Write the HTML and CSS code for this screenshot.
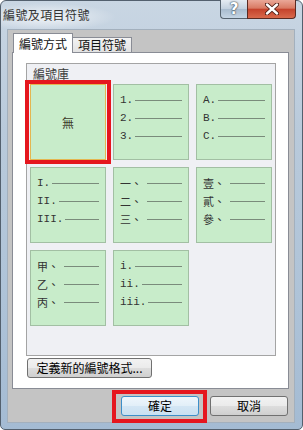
FILE: index.html
```html
<!DOCTYPE html>
<html lang="zh-Hant">
<head>
    <meta charset="UTF-8">
    <title>編號及項目符號</title>
    <link rel="stylesheet" href="styles.css">
</head>
<body>
    <div class="window">
        <div class="titlebar">
            <span class="title">編號及項目符號</span>
            <div class="caption">
                <span class="cap-help">?</span>
                <span class="cap-close">
                    <svg width="14" height="12" viewBox="0 0 14 12">
                        <path d="M2 1.5 L12 10.5 M12 1.5 L2 10.5" stroke="#4a1a12" stroke-width="4.2" stroke-linecap="round"/>
                        <path d="M2 1.5 L12 10.5 M12 1.5 L2 10.5" stroke="#fff" stroke-width="2.4" stroke-linecap="round"/>
                    </svg>
                </span>
            </div>
        </div>

        <div class="client">
            <div class="tabs">
                <span class="tab active">編號方式</span>
                <span class="tab">項目符號</span>
            </div>

            <div class="panel">
                <div class="library">
                    <div class="library-title">編號庫</div>
                    <div class="gallery">
                        <div class="cell none selected"><span>無</span></div>
                        <div class="cell">
                            <div class="row"><span>1.</span><i class="rule"></i></div>
                            <div class="row"><span>2.</span><i class="rule"></i></div>
                            <div class="row"><span>3.</span><i class="rule"></i></div>
                        </div>
                        <div class="cell">
                            <div class="row"><span>A.</span><i class="rule"></i></div>
                            <div class="row"><span>B.</span><i class="rule"></i></div>
                            <div class="row"><span>C.</span><i class="rule"></i></div>
                        </div>
                        <div class="cell">
                            <div class="row"><span>I.</span><i class="rule"></i></div>
                            <div class="row"><span>II.</span><i class="rule"></i></div>
                            <div class="row"><span>III.</span><i class="rule"></i></div>
                        </div>
                        <div class="cell cjk">
                            <div class="row"><span>一、</span><i class="rule"></i></div>
                            <div class="row"><span>二、</span><i class="rule"></i></div>
                            <div class="row"><span>三、</span><i class="rule"></i></div>
                        </div>
                        <div class="cell cjk">
                            <div class="row"><span>壹、</span><i class="rule"></i></div>
                            <div class="row"><span>貳、</span><i class="rule"></i></div>
                            <div class="row"><span>參、</span><i class="rule"></i></div>
                        </div>
                        <div class="cell cjk">
                            <div class="row"><span>甲、</span><i class="rule"></i></div>
                            <div class="row"><span>乙、</span><i class="rule"></i></div>
                            <div class="row"><span>丙、</span><i class="rule"></i></div>
                        </div>
                        <div class="cell">
                            <div class="row"><span>i.</span><i class="rule"></i></div>
                            <div class="row"><span>ii.</span><i class="rule"></i></div>
                            <div class="row"><span>iii.</span><i class="rule"></i></div>
                        </div>
                    </div>
                </div>

                <button class="btn define">定義新的編號格式...</button>
            </div>

            <div class="actions">
                <button class="btn ok">確定</button>
                <button class="btn">取消</button>
            </div>
        </div>
    </div>
</body>
</html>
```

FILE: styles.css
```css
* {
    box-sizing: border-box;
}

body {
    margin: 0;
    font-family: "Noto Sans CJK TC", "Noto Sans", sans-serif;
    color: #000;
}

.window {
    width: 303px;
    height: 430px;
    padding: 0 7px 6px 6px;
    border: 1px solid #53606e;
    border-radius: 6px 6px 5px 5px;
    background:
        radial-gradient(ellipse 70px 14px at 45px 16px, rgba(255,255,255,0.75), rgba(255,255,255,0) 100%),
        linear-gradient(to bottom, #c9d6e3, #b9cadb 30%, #aec3d8 70%, #a4bbd3);
    display: flex;
    flex-direction: column;
}

/* title bar */

.titlebar {
    height: 28px;
    display: flex;
    align-items: flex-start;
}

.title {
    margin: 6px 0 0 -4px;
    font-size: 12px;
    line-height: 16px;
    letter-spacing: 0.4px;
    color: #333;
}

.caption {
    margin: -1px -1px 0 auto;
    display: flex;
}

.cap-help,
.cap-close {
    height: 19px;
    display: flex;
    align-items: center;
    justify-content: center;
    border: 1px solid #56636f;
    border-top: none;
}

.cap-help {
    width: 27px;
    border-right: none;
    border-radius: 0 0 0 4px;
    background: linear-gradient(to bottom, #e4ebf2, #c3d1df 48%, #a9bccf 52%, #c5d5e4);
    font: bold 15px "DejaVu Sans", sans-serif;
    color: #fff;
    text-shadow: 0 0 2px #2e3a46, 0 0 1px #2e3a46;
}

.cap-close {
    width: 49px;
    border-radius: 0 0 4px 0;
    border-color: #5a2a22;
    background: linear-gradient(to bottom, #eaa898, #d97a63 45%, #c5432c 52%, #d8694c);
}

/* dialog body */

.client {
    flex: 1;
    background: #c4c4c4;
    border: 1px solid #a3b0bd;
    padding: 3px 5px 0 4px;
    display: flex;
    flex-direction: column;
}

.tabs {
    display: flex;
    align-items: flex-end;
    height: 20px;
    padding-left: 1px;
    margin-bottom: -1px;
    position: relative;
    z-index: 1;
}

.tab {
    font-size: 12px;
    line-height: 14px;
    padding: 0 5px;
    height: 15px;
    margin-bottom: 1px;
    border: 1px solid #898c95;
    border-bottom: none;
    border-left: none;
    background: linear-gradient(to bottom, #f3f3f3, #e2e2e2);
    color: #111;
}

.tab.active {
    height: 20px;
    line-height: 19px;
    margin-bottom: 0;
    border-left: 1px solid #898c95;
    background: #fff;
}

.panel {
    height: 337px;
    background: #fff;
    border: 1px solid #898c95;
    padding: 10px 0 0 13px;
}

.library {
    width: 250px;
    height: 293px;
    border: 1px solid #a4a4a4;
    background: #eff0f4;
    padding: 0 3px;
}

.library-title {
    height: 20px;
    padding: 1px 0 0 3px;
    font-size: 12px;
    line-height: 17px;
    color: #3a3a3a;
}

.gallery {
    display: grid;
    grid-template-columns: repeat(3, 76px);
    grid-auto-rows: 76px;
    gap: 7px;
}

.cell {
    position: relative;
    background: #c8ecca;
    border: 1px solid #a2bfa3;
    padding: 6px 6px 0 6px;
}

.row {
    display: flex;
    align-items: center;
    height: 18px;
    font-family: "Liberation Mono", "Noto Sans CJK TC", monospace;
    font-size: 11px;
    color: #333;
    white-space: nowrap;
}

.rule {
    flex: 1;
    height: 1px;
    margin: 1px 0 0 2px;
    background: #7a8b7b;
}

.cjk .rule {
    margin-left: 5px;
}

.cell.none {
    display: flex;
    align-items: center;
    justify-content: center;
    padding: 0;
    font-size: 12px;
    color: #3d3a2a;
}

.cell.selected {
    border-color: #e4b650;
}

.cell.selected::after {
    content: "";
    position: absolute;
    top: -5px;
    left: -6px;
    right: -6px;
    bottom: -5px;
    border: 4px solid #e5161e;
}

/* buttons */

.btn {
    height: 20px;
    padding: 0;
    font-family: "Noto Sans CJK TC", "Noto Sans", sans-serif;
    font-size: 12px;
    line-height: 16px;
    color: #000;
    border: 1px solid #707070;
    border-radius: 3px;
    background: linear-gradient(to bottom, #f2f2f2, #ebebeb 48%, #dddddd 52%, #cfcfcf);
}

.define {
    display: block;
    width: 125px;
    margin: 2px 0 0 1px;
}

.actions {
    display: flex;
    justify-content: flex-end;
    gap: 11px;
    margin-top: 7px;
    padding-right: 1px;
}

.actions .btn {
    width: 78px;
}

.ok {
    position: relative;
    border-color: #3c8fc9;
    background: linear-gradient(to bottom, #eef6fc, #e2eff8 48%, #d3e6f4 52%, #c9e0f1);
}

.ok::after {
    content: "";
    position: absolute;
    top: -7px;
    left: -10px;
    right: -9px;
    bottom: -8px;
    border: 4px solid #e5161e;
}
```
